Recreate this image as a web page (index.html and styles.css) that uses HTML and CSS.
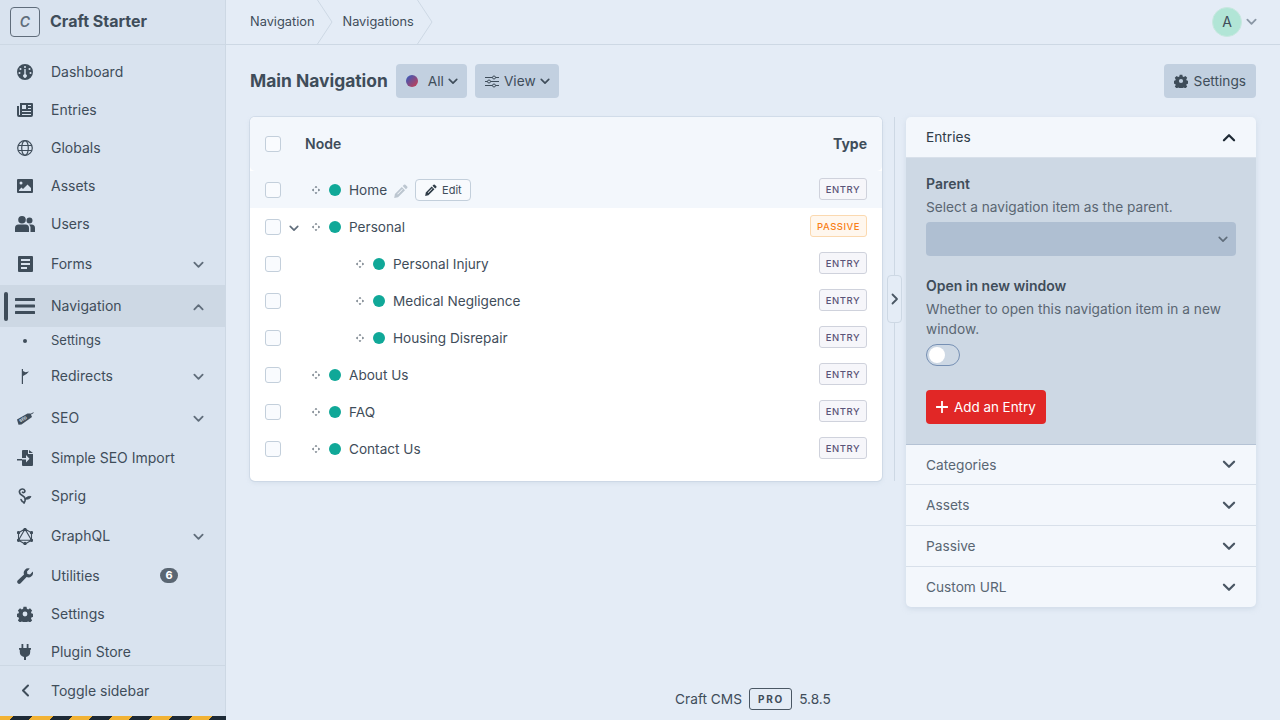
FILE: index.html
```html
<!DOCTYPE html>
<html lang="en">
<head>
    <meta charset="UTF-8">
    <title>Navigation - Craft Starter</title>
    <link rel="stylesheet" href="styles.css">
</head>
<body>
    <svg class="sprites" width="0" height="0">
        <symbol id="chev" viewBox="0 0 12 8"><path d="M1.5 1.5 6 6l4.500-4.500" fill="none" stroke="currentColor" stroke-width="2" stroke-linecap="round" stroke-linejoin="round"/></symbol>
        <symbol id="gear" viewBox="0 0 16 16"><path fill="currentColor" fill-rule="evenodd" d="M6.500.8h3l.4 2 1.300.6 1.800-1.100 2.100 2.100-1.100 1.800.6 1.300 2 .4v3l-2 .4-.6 1.300 1.100 1.800-2.100 2.100-1.800-1.100-1.300.6-.4 2h-3l-.4-2-1.300-.6-1.800 1.100-2.100-2.100 1.100-1.800-.6-1.300-2-.4v-3l2-.4.6-1.300-1.100-1.800 2.100-2.100 1.800 1.100 1.300-.6zM8 5.600a2.400 2.400 0 1 0 0 4.800 2.400 2.400 0 0 0 0-4.800z"/></symbol>
        <symbol id="move" viewBox="0 0 8 8"><path fill="currentColor" d="M4 0l1.400 1.600H2.600zM4 8 2.600 6.400h2.800zM0 4l1.600-1.400v2.800zM8 4 6.400 5.400V2.600z"/></symbol>
        <symbol id="pencil" viewBox="0 0 14 14"><path fill="currentColor" fill-rule="evenodd" d="M10 .8a1 1 0 0 1 1.400 0l1.800 1.800a1 1 0 0 1 0 1.400l-1.300 1.300-3.200-3.200zM7.800 3 11 6.200l-7 7-3.800.7.700-3.900zM3.200 10l.6.6L8.800 5.600 8.200 5z"/></symbol>
    </svg>
    <div class="app">
        <aside class="sidebar">
            <div class="site">
                <span class="site-logo">C</span>
                <span class="site-name">Craft Starter</span>
            </div>
            <nav class="nav">
                <a class="nav-item"><span class="nav-icon"><svg width="16" height="16" viewBox="0 0 16 16"><path fill="currentColor" fill-rule="evenodd" d="M8 0a8 8 0 1 1 0 16A8 8 0 0 1 8 0zM8 2a1 1 0 1 0 0 2 1 1 0 0 0 0-2zM3.500 4a1 1 0 1 0 0 2 1 1 0 0 0 0-2zm9 0a1 1 0 1 0 0 2 1 1 0 0 0 0-2zM2.500 8a1 1 0 1 0 0 2 1 1 0 0 0 0-2zm11 0a1 1 0 1 0 0 2 1 1 0 0 0 0-2zM7.300 5v5.200a1.800 1.800 0 1 0 1.400 0V5z"/></svg></span>Dashboard</a>
                <a class="nav-item"><span class="nav-icon"><svg width="16" height="14" viewBox="0 0 16 14"><path fill="currentColor" fill-rule="evenodd" d="M3 0h12a1 1 0 0 1 1 1v11a2 2 0 0 1-2 2H2a2 2 0 0 1-2-2V3h2v9h1zM5 2v4h4V2zm6 0v1h3V2zm0 3v1h3V5zM5 8v1h9V8zm0 3v1h9v-1z"/></svg></span>Entries</a>
                <a class="nav-item"><span class="nav-icon"><svg width="16" height="16" viewBox="0 0 16 16" fill="none" stroke="currentColor" stroke-width="1.200"><circle cx="8" cy="8" r="7.300"/><ellipse cx="8" cy="8" rx="3.300" ry="7.300"/><path d="M1.200 5.500h13.600M1.200 10.500h13.600"/></svg></span>Globals</a>
                <a class="nav-item"><span class="nav-icon"><svg width="16" height="14" viewBox="0 0 16 14"><path fill="currentColor" fill-rule="evenodd" d="M1 0h14a1 1 0 0 1 1 1v12a1 1 0 0 1-1 1H1a1 1 0 0 1-1-1V1a1 1 0 0 1 1-1zm3 2.500a1.500 1.500 0 1 0 0 3 1.500 1.500 0 0 0 0-3zM2 12h12V9l-3.500-3.500L6 10 4.500 8.500 2 11z"/></svg></span>Assets</a>
                <a class="nav-item"><span class="nav-icon"><svg width="20" height="16" viewBox="0 0 20 16"><path fill="currentColor" d="M7 0a3.800 3.800 0 1 1 0 7.600A3.800 3.800 0 0 1 7 0zm7.500 1.500a3 3 0 1 1 0 6 3 3 0 0 1 0-6zM3.500 8.500h7A3.500 3.500 0 0 1 14 12v4H0v-4a3.500 3.500 0 0 1 3.500-3.500zm10.500 0h2.500A3.500 3.500 0 0 1 20 12v4h-4.500v-4.500c0-1-.6-2.200-1.500-3z"/></svg></span>Users</a>
                <a class="nav-item tall"><span class="nav-icon"><svg width="15" height="16" viewBox="0 0 15 16"><path fill="currentColor" fill-rule="evenodd" d="M1 0h13a1 1 0 0 1 1 1v14a1 1 0 0 1-1 1H1a1 1 0 0 1-1-1V1a1 1 0 0 1 1-1zm2 3v2h9V3zm0 4v2h9V7zm0 4v2h6v-2z"/></svg></span>Forms<svg class="nav-chev"><use href="#chev"/></svg></a>
                <a class="nav-item tall active"><span class="nav-bar"></span><span class="nav-icon"><svg width="20" height="16" viewBox="0 0 20 16"><path fill="currentColor" d="M1 0h18a1 1 0 0 1 0 3H1a1 1 0 0 1 0-3zm0 6.500h18a1 1 0 0 1 0 3H1a1 1 0 0 1 0-3zM1 13h18a1 1 0 0 1 0 3H1a1 1 0 0 1 0-3z"/></svg></span>Navigation<svg class="nav-chev up"><use href="#chev"/></svg></a>
                <a class="nav-sub"><span class="nav-icon"><span class="sub-dot"></span></span>Settings</a>
                <a class="nav-item tall"><span class="nav-icon"><svg width="8" height="15" viewBox="0 0 8 15"><path fill="currentColor" d="M.8 0h1.200v15H.8zM2 2l2.500 1.300L8 2.500 5.500 5 2 7z"/></svg></span>Redirects<svg class="nav-chev"><use href="#chev"/></svg></a>
                <a class="nav-item tall"><span class="nav-icon"><svg width="17" height="13" viewBox="0 0 17 13"><path fill="currentColor" d="M0 7.500 10.500 1.500l3 0 1.500 3.500L4.500 12.500l-3 .3z"/><path d="M13 2.600 16.500.7" stroke="currentColor" fill="none"/><text class="seo-tag" x="3" y="10.500" transform="rotate(-30 3 10)">SEO</text></svg></span>SEO<svg class="nav-chev"><use href="#chev"/></svg></a>
                <a class="nav-item"><span class="nav-icon"><svg width="16" height="16" viewBox="0 0 16 16"><path fill="currentColor" fill-rule="evenodd" d="M5 1a1 1 0 0 1 1-1h5v4h5v11a1 1 0 0 1-1 1H6a1 1 0 0 1-1-1v-4.500H0v-1.500h5zM12 0l4 3h-4zM9 5v3H5v1.500h4v3l3.500-3.700z"/></svg></span>Simple SEO Import</a>
                <a class="nav-item"><span class="nav-icon"><svg width="14" height="16" viewBox="0 0 14 16" fill="none" stroke="currentColor" stroke-width="1.600" stroke-linecap="round"><path d="M6 15C8 12 7.500 9.500 5 8 2 6.500 1 5 1.500 3 2.200.5 6 .5 6.800 2.500 7.300 4 5.500 5.200 4.500 4.200"/><path fill="currentColor" stroke-width=".8" d="M7 11c1.200-2 4-3 6-2.500-.5 2-3.500 3.500-6 2.500z"/><path d="M6 14.600C4.500 14 3.500 13 3 11.500"/></svg></span>Sprig</a>
                <a class="nav-item tall"><span class="nav-icon"><svg width="16" height="17" viewBox="0 0 16 17" fill="none" stroke="currentColor" stroke-width="1.100"><path d="M8 1 14.500 4.700v7.600L8 16 1.500 12.300V4.700zM8 1 1.500 12.300h13z"/><circle cx="8" cy="1.500" r="1.100" fill="currentColor"/><circle cx="14.500" cy="4.700" r="1.100" fill="currentColor"/><circle cx="14.500" cy="12.300" r="1.100" fill="currentColor"/><circle cx="8" cy="15.500" r="1.100" fill="currentColor"/><circle cx="1.500" cy="12.300" r="1.100" fill="currentColor"/><circle cx="1.500" cy="4.700" r="1.100" fill="currentColor"/></svg></span>GraphQL<svg class="nav-chev"><use href="#chev"/></svg></a>
                <a class="nav-item"><span class="nav-icon"><svg width="16" height="16" viewBox="0 0 16 16"><path fill="currentColor" d="M15.800 3.600 13 6.400l-2.600-.4-.4-2.600L12.800.6A4.500 4.500 0 0 0 7 6.400L.6 12.600a2 2 0 0 0 2.800 2.800L9.600 9a4.500 4.500 0 0 0 6.200-5.400z"/></svg></span>Utilities<span class="nav-badge">6</span></a>
                <a class="nav-item"><span class="nav-icon"><svg class="gear"><use href="#gear"/></svg></span>Settings</a>
                <a class="nav-item"><span class="nav-icon"><svg width="12" height="16" viewBox="0 0 12 16"><path fill="currentColor" d="M2.500 0h1.800v4H7.700V0h1.800v4H12v1.800h-.8V8a5 5 0 0 1-4.200 4.900V16H5v-3.100A5 5 0 0 1 .8 8V5.800H0V4h2.500z"/></svg></span>Plugin Store</a>
            </nav>
            <a class="nav-item toggle"><span class="nav-icon"><svg width="9" height="13" viewBox="0 0 9 13"><path d="M7 1.500 2 6.500l5 5" fill="none" stroke="currentColor" stroke-width="2" stroke-linecap="round" stroke-linejoin="round"/></svg></span>Toggle sidebar</a>
            <div class="stripes"></div>
        </aside>

        <main class="main">
            <header class="topbar">
                <div class="crumbs">
                    <a class="crumb">Navigation</a>
                    <svg class="crumb-sep" viewBox="0 0 16 44"><path d="M.5 0 15 22 .5 44"/></svg>
                    <a class="crumb">Navigations</a>
                    <svg class="crumb-sep" viewBox="0 0 16 44"><path d="M.5 0 15 22 .5 44"/></svg>
                </div>
                <div class="account">
                    <span class="avatar">A</span>
                    <svg class="account-chev"><use href="#chev"/></svg>
                </div>
            </header>

            <div class="title-row">
                <h1>Main Navigation</h1>
                <button class="btn site-btn"><span class="site-dot"></span>All<svg class="btn-chev"><use href="#chev"/></svg></button>
                <button class="btn view-btn"><svg width="14" height="13" viewBox="0 0 14 13" fill="none" stroke="currentColor"><path d="M0 2.500h14M0 6.500h14M0 10.500h14"/><circle cx="9" cy="2.500" r="1.500" fill="#c2d0e0"/><circle cx="4" cy="6.500" r="1.500" fill="#c2d0e0"/><circle cx="9" cy="10.500" r="1.500" fill="#c2d0e0"/></svg>View<svg class="btn-chev"><use href="#chev"/></svg></button>
                <button class="btn settings-btn"><svg class="gear-small"><use href="#gear"/></svg>Settings</button>
            </div>

            <div class="content">
                <section class="card tree">
                    <div class="tree-head">
                        <span class="check"></span>
                        <span class="th-node">Node</span>
                        <span class="th-type">Type</span>
                    </div>
                    <div class="tree-row hover">
                        <span class="check"></span>
                        <svg class="grip"><use href="#move"/></svg><span class="status"></span><span class="node-name">Home</span>
                        <svg class="pencil-ghost"><use href="#pencil"/></svg>
                        <span class="edit-btn"><svg class="edit-icon"><use href="#pencil"/></svg>Edit</span>
                        <span class="tag">ENTRY</span>
                    </div>
                    <div class="tree-row">
                        <span class="check"></span>
                        <svg class="row-chev"><use href="#chev"/></svg>
                        <svg class="grip"><use href="#move"/></svg><span class="status"></span><span class="node-name">Personal</span>
                        <span class="tag passive">PASSIVE</span>
                    </div>
                    <div class="tree-row child">
                        <span class="check"></span>
                        <svg class="grip"><use href="#move"/></svg><span class="status"></span><span class="node-name">Personal Injury</span>
                        <span class="tag">ENTRY</span>
                    </div>
                    <div class="tree-row child">
                        <span class="check"></span>
                        <svg class="grip"><use href="#move"/></svg><span class="status"></span><span class="node-name">Medical Negligence</span>
                        <span class="tag">ENTRY</span>
                    </div>
                    <div class="tree-row child">
                        <span class="check"></span>
                        <svg class="grip"><use href="#move"/></svg><span class="status"></span><span class="node-name">Housing Disrepair</span>
                        <span class="tag">ENTRY</span>
                    </div>
                    <div class="tree-row">
                        <span class="check"></span>
                        <svg class="grip"><use href="#move"/></svg><span class="status"></span><span class="node-name">About Us</span>
                        <span class="tag">ENTRY</span>
                    </div>
                    <div class="tree-row">
                        <span class="check"></span>
                        <svg class="grip"><use href="#move"/></svg><span class="status"></span><span class="node-name">FAQ</span>
                        <span class="tag">ENTRY</span>
                    </div>
                    <div class="tree-row">
                        <span class="check"></span>
                        <svg class="grip"><use href="#move"/></svg><span class="status"></span><span class="node-name">Contact Us</span>
                        <span class="tag">ENTRY</span>
                    </div>
                </section>

                <div class="divider">
                    <span class="collapse"><svg width="8" height="12" viewBox="0 0 8 12"><path d="M1.500 1.500 6 6l-4.500 4.500" fill="none" stroke="currentColor" stroke-width="1.800" stroke-linecap="round" stroke-linejoin="round"/></svg></span>
                </div>

                <aside class="card panel">
                    <div class="acc-head first">Entries<svg class="acc-chev up"><use href="#chev"/></svg></div>
                    <div class="acc-body">
                        <div class="field-label">Parent</div>
                        <div class="field-help">Select a navigation item as the parent.</div>
                        <div class="select"><svg class="select-chev"><use href="#chev"/></svg></div>
                        <div class="field-label second">Open in new window</div>
                        <div class="field-help">Whether to open this navigation item in a new window.</div>
                        <span class="switch"><span class="knob"></span></span>
                        <button class="add-btn"><svg width="12" height="12" viewBox="0 0 12 12"><path d="M6 .5v11M.5 6h11" stroke="currentColor" stroke-width="1.800" stroke-linecap="round"/></svg>Add an Entry</button>
                    </div>
                    <div class="acc-head cats">Categories<svg class="acc-chev"><use href="#chev"/></svg></div>
                    <div class="acc-head">Assets<svg class="acc-chev"><use href="#chev"/></svg></div>
                    <div class="acc-head">Passive<svg class="acc-chev"><use href="#chev"/></svg></div>
                    <div class="acc-head">Custom URL<svg class="acc-chev"><use href="#chev"/></svg></div>
                </aside>
            </div>

            <footer class="footer">Craft CMS <span class="edition">PRO</span> 5.8.5</footer>
        </main>
    </div>
</body>
</html>
```

FILE: styles.css
```css
* {
    box-sizing: border-box;
}

html,
body {
    margin: 0;
    height: 100%;
    overflow: hidden;
}

body {
    background-color: #e4ecf6;
    color: #3f4d5a;
    font-family: Inter, "Liberation Sans", sans-serif;
    font-size: 13.7px;
}

.sprites {
    position: absolute;
}

.app {
    display: flex;
    height: 720px;
}

/* sidebar */
.sidebar {
    width: 226px;
    flex: none;
    display: flex;
    flex-direction: column;
    background-color: #d9e3ef;
    border-right: 1px solid #cdd8e4;
    font-size: 14px;
}

.site {
    height: 45px;
    flex: none;
    display: flex;
    align-items: center;
    gap: 10px;
    padding: 0 10px 1px;
    border-bottom: 1px solid #cdd8e4;
}

.site-logo {
    width: 30px;
    height: 30px;
    display: flex;
    align-items: center;
    justify-content: center;
    border: 1px solid #606d7b;
    border-radius: 4px;
    color: #606d7b;
    font-size: 14px;
    font-weight: 600;
    font-style: italic;
}

.site-name {
    font-size: 16px;
    font-weight: 700;
    margin-top: -1px;
}

.nav {
    flex: 1;
    min-height: 0;
    overflow: hidden;
    padding-top: 8px;
    border-bottom: 1px solid #cdd8e4;
}

.nav-item {
    height: 38px;
    display: flex;
    align-items: center;
    position: relative;
    padding-bottom: 2px;
}

.nav-item.tall {
    height: 42px;
}

.nav-item.active {
    background-color: #cdd8e4;
}

.nav-bar {
    position: absolute;
    left: 4px;
    top: 7px;
    width: 4px;
    height: 29px;
    border-radius: 2px;
    background-color: #3f4d5a;
}

.nav-icon {
    width: 20px;
    flex: none;
    margin: 2px 16px 0 15px;
    display: flex;
    justify-content: center;
}

.nav-chev {
    position: absolute;
    left: 193px;
    top: 18px;
    width: 11px;
    height: 8px;
    color: #606d7b;
}

.nav-chev.up {
    transform: rotate(180deg);
}

.nav-sub {
    height: 28px;
    display: flex;
    align-items: center;
    font-size: 13px;
    padding-bottom: 2px;
}

.sub-dot {
    width: 4px;
    height: 4px;
    border-radius: 50%;
    background-color: #3f4d5a;
}

.seo-tag {
    fill: #d9e3ef;
    font-size: 4px;
    font-weight: 700;
}

.nav-badge {
    position: absolute;
    left: 160px;
    top: 11px;
    width: 18px;
    height: 15px;
    border-radius: 8px;
    background-color: #5a6672;
    color: #fff;
    font-size: 11px;
    font-weight: 700;
    line-height: 15px;
    text-align: center;
}

.gear {
    width: 16px;
    height: 16px;
}

.toggle {
    height: 50px;
    flex: none;
    padding-bottom: 1px;
}

.toggle .nav-icon {
    margin-top: 0;
}

/* hazard strip along the bottom */
.stripes {
    height: 4px;
    flex: none;
    margin-right: -1px;
    background: repeating-linear-gradient(135deg, #f2b233 0 9.2px, #1d2a36 9.2px 23.3px, #f2b233 23.3px 28.28px);
}

/* main area */
.main {
    flex: 1;
    min-width: 0;
    display: flex;
    flex-direction: column;
}

.topbar {
    height: 45px;
    flex: none;
    display: flex;
    justify-content: space-between;
    align-items: center;
    border-bottom: 1px solid #cdd8e4;
    padding: 0 23px 0 24px;
}

.crumbs {
    display: flex;
    height: 44px;
}

.crumb {
    display: flex;
    align-items: center;
    font-size: 12.8px;
    padding-bottom: 1px;
}

.crumb-sep {
    width: 16px;
    height: 44px;
    margin: 0 9px 0 3px;
    fill: none;
    stroke: #cdd8e4;
}

.account {
    display: flex;
    align-items: center;
    gap: 4px;
}

.avatar {
    width: 30px;
    height: 30px;
    border-radius: 50%;
    background-color: #b1e5d6;
    border: 1px solid #c8e8e0;
    display: flex;
    align-items: center;
    justify-content: center;
    font-size: 14px;
    padding-bottom: 2px;
}

.account-chev {
    width: 11px;
    height: 8px;
    color: #8a97a5;
}

.title-row {
    display: flex;
    align-items: center;
    gap: 8px;
    padding: 19px 24px;
    flex: none;
}

h1 {
    margin: 0 0 2px;
    font-size: 17.4px;
    font-weight: 700;
    color: #3f4d5a;
}

.btn {
    height: 34px;
    display: flex;
    align-items: center;
    border: none;
    border-radius: 4px;
    background-color: #c2d0e0;
    color: #3f4d5a;
    font: inherit;
    padding: 0 9px 0 10px;
}

.site-dot {
    width: 12px;
    height: 12px;
    border-radius: 50%;
    background: linear-gradient(135deg, #2b5cc4, #d13c4a);
    margin-right: 10px;
}

.btn-chev {
    width: 10px;
    height: 7px;
    margin-left: 4px;
}

.view-btn svg:first-child {
    margin-right: 5px;
}

.settings-btn {
    margin-left: auto;
    gap: 6px;
    padding: 0 10px;
}

.gear-small {
    width: 14px;
    height: 14px;
}

/* content */
.content {
    display: flex;
    align-items: flex-start;
    padding: 0 24px;
    flex: none;
}

.card {
    background-color: #fff;
    border-radius: 5px;
    box-shadow: 0 0 0 1px rgba(190, 204, 220, .45), 0 2px 4px rgba(190, 204, 220, .4);
}

.tree {
    width: 632px;
    height: 364px;
    flex: none;
    font-size: 13.6px;
}

.tree-head {
    height: 54px;
    display: flex;
    align-items: center;
    padding: 0 15px 1px;
    background-color: #f3f7fc;
    border-radius: 5px;
    font-size: 14px;
    font-weight: 600;
}

.th-node {
    margin-left: 24px;
}

.th-type {
    margin-left: auto;
    font-weight: 700;
}

.check {
    width: 16px;
    height: 16px;
    flex: none;
    border: 1px solid #c3cfdb;
    border-radius: 3px;
    background-color: #f9fbfe;
}

.tree-row {
    height: 37px;
    display: flex;
    align-items: center;
    padding: 0 15px;
    position: relative;
}

.tree-row.hover {
    background-color: #f3f7fc;
}

.grip {
    width: 8px;
    height: 8px;
    margin-left: 31px;
    color: #3f4d5a;
}

.row-chev {
    width: 10px;
    height: 7px;
    margin-left: 8px;
    margin-right: -18px;
    margin-top: 3px;
    color: #606d7b;
}

.tree-row.child .grip {
    margin-left: 75px;
}

.status {
    width: 12px;
    height: 12px;
    border-radius: 50%;
    background-color: #10a898;
    margin-left: 9px;
}

.node-name {
    margin-left: 8px;
}

.pencil-ghost {
    width: 14px;
    height: 14px;
    margin-left: 7px;
    margin-top: 2px;
    color: #bcc6d0;
}

.edit-btn {
    height: 22px;
    display: flex;
    align-items: center;
    margin-left: 7px;
    padding: 0 8px 0 9px;
    border: 1px solid #c3cfdb;
    border-radius: 4px;
    background-color: #f8fafd;
    font-size: 11px;
}

.edit-icon {
    width: 12px;
    height: 12px;
    margin-right: 5px;
    color: #2f3c48;
}

.tag {
    margin: 0 0 1px auto;
    height: 22px;
    padding: 0 6px;
    display: flex;
    align-items: center;
    border: 1px solid #cfd2dc;
    border-radius: 3px;
    background-color: #f6f6fa;
    color: #5a5478;
    font-size: 9.500px;
    font-weight: 500;
    letter-spacing: .5px;
}

.tag.passive {
    border-color: #fbd9b0;
    background-color: #fff7ee;
    color: #f97f16;
}

.divider {
    width: 24px;
    flex: none;
    align-self: stretch;
    position: relative;
}

.divider::before {
    content: "";
    position: absolute;
    left: 12px;
    top: 0;
    height: 364px;
    width: 1px;
    background-color: #cdd8e4;
}

.collapse {
    position: absolute;
    left: 5px;
    top: 158px;
    width: 15px;
    height: 48px;
    display: flex;
    align-items: center;
    justify-content: center;
    border: 1px solid #cdd8e4;
    border-radius: 4px;
    background-color: #e4ecf6;
    color: #4a5764;
}

.panel {
    width: 350px;
    flex: none;
    overflow: hidden;
    background-color: #f3f7fc;
    box-shadow: 0 2px 5px rgba(190, 204, 220, .5);
}

.acc-head {
    height: 41px;
    display: flex;
    align-items: center;
    justify-content: space-between;
    padding: 0 20px;
    color: #596673;
    border-top: 1px solid #d8e0ea;
}

.acc-head.cats {
    height: 40px;
    border-top-color: #b4c2d4;
}

.acc-head.first {
    border-top: none;
    border-bottom: 1px solid #d8e0ea;
    color: #2f3c48;
}

.acc-chev {
    width: 14px;
    height: 9px;
    color: #4a5764;
}

.acc-chev.up {
    transform: rotate(180deg);
    color: #1f2b36;
}

.acc-body {
    height: 286px;
    padding: 16px 20px 0;
    background-color: #cdd8e4;
}

.field-label {
    font-size: 14px;
    font-weight: 600;
    line-height: 20px;
}

.field-label.second {
    margin-top: 20px;
}

.field-help {
    color: #5a6672;
    line-height: 20px;
    margin-top: 3px;
}

.select {
    height: 34px;
    margin-top: 5px;
    border-radius: 4px;
    background-color: #afbfd2;
    display: flex;
    align-items: center;
    justify-content: flex-end;
    padding-right: 8px;
}

.select-chev {
    width: 10px;
    height: 7px;
    color: #606d7b;
}

.switch {
    display: block;
    width: 34px;
    height: 22px;
    margin-top: 5px;
    border: 1px solid #7690b4;
    border-radius: 11px;
    padding: 2px;
}

.knob {
    display: block;
    width: 16px;
    height: 16px;
    border-radius: 50%;
    background-color: #fff;
}

.add-btn {
    display: flex;
    align-items: center;
    gap: 6px;
    height: 34px;
    margin-top: 24px;
    padding: 0 10px;
    border: none;
    border-radius: 4px;
    background-color: #e12726;
    color: #fff;
    font: inherit;
    font-size: 13.4px;
}

.footer {
    position: absolute;
    left: 226px;
    right: 0;
    top: 688px;
    display: flex;
    justify-content: center;
    align-items: center;
    gap: 7px;
    color: #3f4d5a;
    height: 22px;
}

.edition {
    height: 22px;
    padding: 0 7px 0 8px;
    display: flex;
    align-items: center;
    border: 1px solid #4a5764;
    border-radius: 3px;
    font-size: 10px;
    font-weight: 700;
    letter-spacing: 1.800px;
}
```
